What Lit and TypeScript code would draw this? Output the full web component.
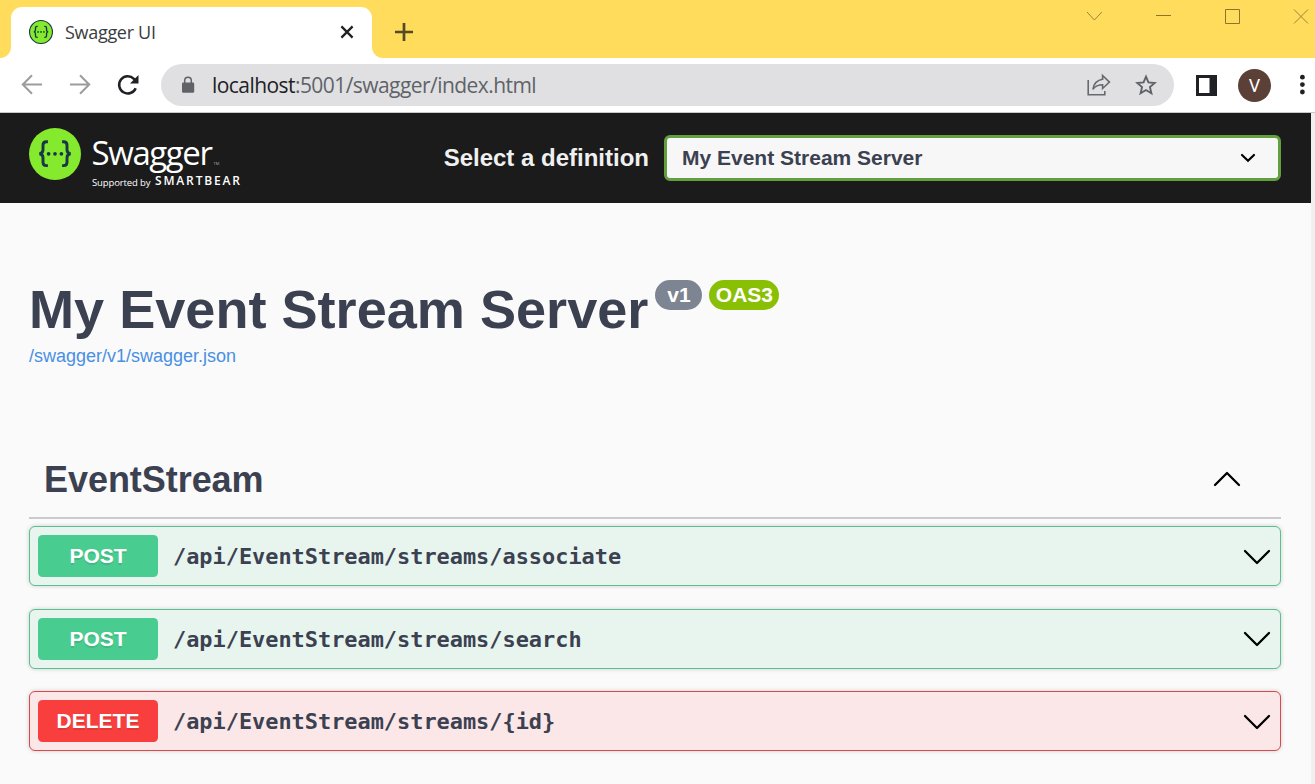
import { LitElement, html, css, svg } from "lit";
import { customElement, property } from "lit/decorators.js";
import { classMap } from "lit/directives/class-map.js";

const braces = svg`
  <path d="M18.900 13.800h-1.500c-2.500 0-3.400 1.200-3.400 3.400v4.500c0 2.300-1.200 3.700-3.600 4 2.400.3 3.600 1.700 3.600 4v4.500c0 2.200.9 3.400 3.400 3.400h1.500M33.100 13.800h1.500c2.500 0 3.400 1.200 3.400 3.400v4.500c0 2.300 1.200 3.700 3.600 4-2.400.3-3.600 1.700-3.600 4v4.500c0 2.200-.9 3.400-3.400 3.400h-1.500" fill="none" stroke="#173647" stroke-width="2.900"/>
  <circle cx="19.600" cy="25.800" r="1.850" fill="#173647"/><circle cx="26" cy="25.800" r="1.850" fill="#173647"/><circle cx="32.400" cy="25.800" r="1.850" fill="#173647"/>`;

@customElement("browser-chrome")
class BrowserChrome extends LitElement {
  static styles = css`
    :host { display: block; font-family: "Open Sans", "Noto Sans", sans-serif; }
    svg { display: block; flex: none; }
    .strip { height: 58px; box-sizing: border-box; background: #ffdc5c; display: flex; }
    .corner { width: 11px; height: 11px; align-self: flex-end; background: radial-gradient(circle at 0 0, transparent 10.5px, #fff 11.5px); }
    .corner.right { background: radial-gradient(circle at 100% 0, transparent 10.5px, #fff 11.5px); }
    .tab { width: 361px; box-sizing: border-box; margin-top: 7px; background: #fff; border-radius: 11px 11px 0 0; display: flex; align-items: center; padding: 0 18px 1px 18px; }
    .name { margin-left: 12px; font-size: 18px; line-height: 24px; letter-spacing: -0.3px; color: #3a3c3f; flex: 1; white-space: nowrap; }
    .plus { margin: 22px 0 0 11px; }
    .window { margin-left: auto; display: flex; gap: 53px; padding-top: 8px; margin-right: 5px; }
    .wide { overflow: visible; }
    .bar { height: 54px; box-sizing: border-box; background: #fff; display: flex; align-items: center; padding-left: 21px; }
    .forward { margin-left: 26px; }
    .reload { margin-left: 26px; }
    .address { margin-left: 22px; width: 1013px; height: 42px; border-radius: 21px; background: #e0e0e2; display: flex; align-items: center; box-sizing: border-box; padding: 0 17px 0 20px; }
    .url { flex: 1; margin-left: 17px; font-size: 21px; line-height: 28px; color: #5f6368; white-space: nowrap; letter-spacing: -0.56px; }
    .host { color: #202124; }
    .star { margin-left: 24px; }
    .panel { margin-left: 22px; }
    .avatar { margin-left: 21px; width: 33px; height: 33px; border-radius: 50%; background: #5b4037; color: #fff; font: 18px/34px Roboto, sans-serif; text-align: center; }
    .dots { margin-left: 28px; }
  `;
  render() {
    return html`
      <div class="strip">
        <div class="corner"></div>
        <div class="tab">
          <svg width="24" height="24" viewBox="0 0 52 52"><circle cx="26" cy="26" r="24.8" fill="#85ea2d" stroke="#173647" stroke-width="2.4"/>${braces}</svg>
          <span class="name">Swagger UI</span>
          <svg width="14" height="14" viewBox="0 0 14 14"><path d="M1.4 1.4l11.2 11.2M12.6 1.4L1.4 12.6" stroke="#202124" stroke-width="2.3"/></svg>
        </div>
        <div class="corner right"></div>
        <svg class="plus" width="20" height="20" viewBox="0 0 20 20"><path d="M10 1v18M1 10h18" stroke="#544a24" stroke-width="2.7"/></svg>
        <div class="window">
          <svg width="16" height="16" viewBox="0 0 16 16"><path d="M0 4l7.400 8 7.400-8" fill="none" stroke="#9c853c"/></svg>
          <svg width="16" height="16" viewBox="0 0 16 16"><path d="M0 7.5h15" stroke="#8c742a"/></svg>
          <svg width="16" height="16" viewBox="0 0 16 16"><path d="M.5 1.500h14v14H.5z" fill="none" stroke="#8c742a"/></svg>
          <svg class="wide" width="16" height="16" viewBox="0 0 16 16"><path d="M0 1.500l14 14M14 1.500l-14 14" stroke="#9c853c"/></svg>
        </div>
      </div>
      <div class="bar">
        <svg width="22" height="22" viewBox="0 0 22 22"><path d="M21 10.500H2.500M11 1.300L1.800 10.500l9.200 9.200" fill="none" stroke="#9b9c9e" stroke-width="2"/></svg>
        <svg class="forward" width="22" height="22" viewBox="0 0 22 22"><path d="M1 10.500h18.500M11 1.300l9.200 9.200-9.200 9.200" fill="none" stroke="#9b9c9e" stroke-width="2"/></svg>
        <svg class="reload" width="22" height="22" viewBox="0 0 22 22"><path d="M18.700 14.200a8.600 8.600 0 1 1-1.800-9.400l2 2" fill="none" stroke="#202124" stroke-width="2.500"/><path d="M21.500 1v8.500H13z" fill="#202124"/></svg>
        <div class="address">
          <svg width="14" height="18" viewBox="0 0 14 18"><rect x="1" y="6.500" width="12.200" height="10.300" rx="1.300" fill="#5f6368"/><path d="M3.700 7V4.600a3.300 3.300 0 0 1 6.600 0V7" fill="none" stroke="#5f6368" stroke-width="1.500"/></svg>
          <div class="url"><span class="host">localhost</span>:5001/swagger/index.html</div>
          <svg width="24" height="24" viewBox="0 0 24 24"><path d="M1.200 7v14.800h16.600V18" fill="none" stroke="#66696d" stroke-width="1.600"/><path d="M15.600 2.500l6.800 6.600-6.800 6.400v-3.700c-4.200 0-7.300 1.300-9.700 4.500.8-4.900 3.700-9.100 9.700-10z" fill="none" stroke="#66696d" stroke-width="1.600"/></svg>
          <svg class="star" width="22" height="22" viewBox="0 0 22 22"><path d="M11 2.700l2.450 5.750 6.300.550-4.800 4.100 1.450 6.150L11 16l-5.400 3.250 1.450-6.150-4.800-4.100 6.300-.550z" fill="none" stroke="#5f6368" stroke-width="1.900"/></svg>
        </div>
        <svg class="panel" width="21" height="21" viewBox="0 0 21 21"><path d="M0 0h21v21H0z" fill="#202124"/><path d="M3 3h10.500v15H3z" fill="#fff"/></svg>
        <div class="avatar">V</div>
        <svg class="dots" width="8" height="22" viewBox="0 0 8 22"><circle cx="3.400" cy="3.200" r="2.400" fill="#202124"/><circle cx="3.400" cy="10.600" r="2.400" fill="#202124"/><circle cx="3.400" cy="18" r="2.400" fill="#202124"/></svg>
      </div>
    `;
  }
}

@customElement("op-block")
class OpBlock extends LitElement {
  @property() method = "POST";
  @property() path = "";
  static styles = css`
    :host { display: block; }
    .row { height: 60px; box-sizing: border-box; border: 1px solid #59c08f; border-radius: 6px; background: #e7f5ee; box-shadow: 0 0 4px rgba(0, 0, 0, 0.19); display: flex; align-items: center; padding: 0 9px 0 8px; }
    .row.delete { border-color: #d8494b; background: #fbe7e7; }
    .method { width: 120px; height: 42px; border-radius: 4.5px; background: #49cc90; color: #fff; font: bold 21px/42px "Liberation Sans", Arial, sans-serif; text-align: center; text-shadow: 0 1.5px 0 rgba(0, 0, 0, 0.1); }
    .delete .method { background: #f93e3e; }
    .path { flex: 1; margin-left: 15px; padding-top: 2px; font: bold 21.9px/30px "DejaVu Sans Mono", monospace; color: #3b4151; white-space: nowrap; }
    .chevron { margin-top: 1px; }
  `;
  render() {
    return html`<div class=${classMap({ row: true, delete: this.method === "DELETE" })}>
      <div class="method">${this.method}</div>
      <div class="path">${this.path}</div>
      <svg class="chevron" width="28" height="16" viewBox="0 0 28 16"><path d="M2 2l12 12L26 2" fill="none" stroke="#000" stroke-width="2.300" stroke-linecap="round" stroke-linejoin="round"/></svg>
    </div>`;
  }
}

@customElement("app-root")
class AppRoot extends LitElement {
  static styles = css`
    :host { display: block; height: 784px; overflow: hidden; background: #fff; font-family: "Liberation Sans", Arial, sans-serif; color: #3b4151; }
    svg { display: block; flex: none; }
    .viewport { height: 671px; display: flex; border-top: 1px solid #c6cac8; }
    .page { width: 1311px; background: #fafafa; }
    .gutter { flex: 1; background: #f0f0f0; }
    .topbar { height: 90px; background: #1b1b1b; display: flex; align-items: center; padding: 0 30px 0 29px; }
    .label { margin-left: auto; font-size: 24px; font-weight: bold; color: #f0f0f0; white-space: nowrap; }
    .select { margin-left: 15px; width: 617px; height: 46px; box-sizing: border-box; border: 3px solid #62a03f; border-radius: 6px; background: #f7f7f7; display: flex; align-items: center; justify-content: space-between; padding: 0 22px 0 15px; font-size: 21px; font-weight: bold; }
    .content { padding: 0 30px 0 29px; }
    .heading { display: flex; align-items: flex-start; padding-top: 75px; }
    h1 { margin: 0; font-size: 54.1px; line-height: 62px; white-space: nowrap; }
    .badge { height: 30px; border-radius: 15px; margin: 2px 0 0 7px; box-sizing: border-box; color: #fff; background: #7d8492; font-size: 21px; line-height: 30px; font-weight: bold; text-align: center; width: 47px; }
    .badge.oas { width: 70px; background: #89bf04; }
    .link { display: block; margin-top: 4px; font-size: 18px; line-height: 24px; color: #4990e2; text-decoration: none; }
    .section { height: 76px; margin-top: 73px; border-bottom: 2px solid #c9cbcf; display: flex; align-items: center; justify-content: space-between; padding: 0 40px 0 15px; }
    h2 { margin: 0; padding-top: 2px; font-size: 36px; line-height: 44px; letter-spacing: -0.05px; }
    .ops { display: grid; gap: 22.5px; padding-top: 7px; }
  `;
  private ops = [
    { method: "POST", path: "/api/EventStream/streams/associate" },
    { method: "POST", path: "/api/EventStream/streams/search" },
    { method: "DELETE", path: "/api/EventStream/streams/{id}" },
  ];
  render() {
    return html`
      <browser-chrome></browser-chrome>
      <div class="viewport">
        <div class="page">
          <div class="topbar">
            <svg width="216" height="64" viewBox="0 0 216 64">
              <g transform="translate(0 2)"><circle cx="26" cy="26" r="26" fill="#85ea2d"/>${braces}</g>
              <g fill="#fff" font-family="Open Sans, sans-serif">
                <text x="62.500" y="38.500" font-size="33" textLength="121.500">Swagger</text>
                <text x="184.500" y="38.500" font-size="4" fill="#aaa">TM</text>
                <text x="63" y="59.500" font-size="9.500" textLength="58.500">Supported by</text>
                <text x="126" y="59.300" font-size="12" font-weight="600" textLength="85">SMARTBEAR</text>
              </g>
            </svg>
            <div class="label">Select a definition</div>
            <div class="select">My Event Stream Server
              <svg width="16" height="10" viewBox="0 0 16 10"><path d="M2 2l6 5.700L14 2" fill="none" stroke="#000" stroke-width="2.200" stroke-linecap="round"/></svg>
            </div>
          </div>
          <div class="content">
            <div class="heading"><h1>My Event Stream Server</h1><span class="badge">v1</span><span class="badge oas">OAS3</span></div>
            <a class="link">/swagger/v1/swagger.json</a>
            <div class="section"><h2>EventStream</h2>
              <svg width="28" height="16" viewBox="0 0 28 16"><path d="M2 14L14 2l12 12" fill="none" stroke="#000" stroke-width="2.300" stroke-linecap="round" stroke-linejoin="round"/></svg>
            </div>
            <div class="ops">${this.ops.map((o) => html`<op-block .method=${o.method} .path=${o.path}></op-block>`)}</div>
          </div>
        </div>
        <div class="gutter"></div>
      </div>
    `;
  }
}
